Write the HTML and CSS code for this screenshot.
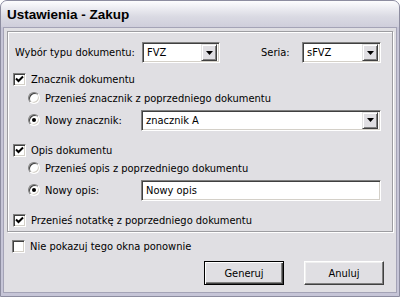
FILE: index.html
```html
<!DOCTYPE html>
<html lang="pl">
<head>
  <meta charset="UTF-8" />
  <title>Ustawienia - Zakup</title>
  <link rel="stylesheet" href="styles.css">
</head>
<body>
  <div class="window">
    <div class="titlebar">Ustawienia - Zakup</div>
    <div class="client">
      <div class="group">
        <div class="row row-type">
          <span class="label label-type">Wybór typu dokumentu:</span>
          <div class="combo combo-type">
            <span class="combo-value">FVZ</span>
            <span class="combo-btn"><svg width="7" height="4" viewBox="0 0 7 4"><path d="M0 0H7L3.5 4Z" fill="#000"/></svg></span>
          </div>
          <span class="label label-seria">Seria:</span>
          <div class="combo combo-seria">
            <span class="combo-value">sFVZ</span>
            <span class="combo-btn"><svg width="7" height="4" viewBox="0 0 7 4"><path d="M0 0H7L3.5 4Z" fill="#000"/></svg></span>
          </div>
        </div>

        <div class="row check-row mt-8">
          <span class="checkbox"><svg width="9" height="9" viewBox="0 0 9 9"><path d="M1 3.5L3.5 6L8 1.5" stroke="#000" stroke-width="2" fill="none"/></svg></span>
          <span class="label">Znacznik dokumentu</span>
        </div>
        <div class="row radio-row mt-3">
          <span class="radio"></span>
          <span class="label">Przenieś znacznik z poprzedniego dokumentu</span>
        </div>
        <div class="row radio-row field-row mt-4">
          <span class="radio on"></span>
          <span class="label label-field">Nowy znacznik:</span>
          <div class="combo combo-wide">
            <span class="combo-value">znacznik A</span>
            <span class="combo-btn"><svg width="7" height="4" viewBox="0 0 7 4"><path d="M0 0H7L3.5 4Z" fill="#000"/></svg></span>
          </div>
        </div>

        <div class="row check-row mt-12">
          <span class="checkbox"><svg width="9" height="9" viewBox="0 0 9 9"><path d="M1 3.5L3.5 6L8 1.5" stroke="#000" stroke-width="2" fill="none"/></svg></span>
          <span class="label">Opis dokumentu</span>
        </div>
        <div class="row radio-row mt-2">
          <span class="radio"></span>
          <span class="label">Przenieś opis z poprzedniego dokumentu</span>
        </div>
        <div class="row radio-row field-row mt-4">
          <span class="radio on"></span>
          <span class="label label-field">Nowy opis:</span>
          <div class="textbox">Nowy opis</div>
        </div>

        <div class="row check-row mt-12">
          <span class="checkbox"><svg width="9" height="9" viewBox="0 0 9 9"><path d="M1 3.5L3.5 6L8 1.5" stroke="#000" stroke-width="2" fill="none"/></svg></span>
          <span class="label">Przenieś notatkę z poprzedniego dokumentu</span>
        </div>
      </div>

      <div class="row check-row outer-check">
        <span class="checkbox"></span>
        <span class="label">Nie pokazuj tego okna ponownie</span>
      </div>

      <div class="buttons">
        <button class="btn btn-default">Generuj</button>
        <button class="btn">Anuluj</button>
      </div>
    </div>
  </div>
</body>
</html>
```

FILE: styles.css
```css
:root {
  --face: #e0dfe3;
  --frame: #c6c5d7;
  --shadow: #9d9da1;
  --dark: #404040;
}

* {
  box-sizing: border-box;
  margin: 0;
  padding: 0;
}

body {
  font-family: 'DejaVu Sans Condensed', 'DejaVu Sans', sans-serif;
  font-size: 11px;
  color: #000;
  background: #fff;
}

.window {
  width: 400px;
  height: 297px;
  background: var(--frame);
  border: 1px solid #8d8da0;
  border-radius: 7px 7px 0 0;
  padding: 0 2px 3px;
  display: flex;
  flex-direction: column;
}

.titlebar {
  height: 26px;
  padding-left: 6px;
  display: flex;
  align-items: center;
  font-family: 'Liberation Sans', Arial, sans-serif;
  font-weight: 700;
  font-size: 13.5px;
  border-radius: 6px 6px 0 0;
  margin: 0 -2px;
  background: linear-gradient(#fdfdfe, #eeeef3 25%, #dadae3 60%, #cfcedb);
}

.client {
  flex: 1;
  background: var(--face);
  border: 1px solid #a4a3b6;
  padding: 3px 3px 0 3px;
}

/* group box */
.group {
  border: 1px solid var(--shadow);
  box-shadow: inset 1px 1px #fff, 1px 1px #fff;
  padding: 10px 5px 3px 5px;
}

.row {
  display: flex;
  align-items: center;
  white-space: nowrap;
}

.row-type {
  height: 21px;
}

.label-type {
  width: 127px;
  margin-left: 2px;
}

.label-seria {
  width: 41px;
  margin-left: 41px;
}

.check-row {
  height: 16px;
}

.radio-row {
  height: 16px;
  padding-left: 15px;
}

.field-row {
  height: 20px;
}

.label-field {
  width: 96px;
}

.mt-2 { margin-top: 2px; }
.mt-3 { margin-top: 3px; }
.mt-4 { margin-top: 4px; }
.mt-8 { margin-top: 8px; }
.mt-12 { margin-top: 12px; }

/* sunken controls */
.checkbox {
  width: 13px;
  height: 13px;
  margin-right: 5px;
  background: #fff;
  border: 1px solid;
  border-color: #808080 #fff #fff #808080;
  box-shadow: inset 1px 1px var(--dark), inset -1px -1px #d4d0c8;
  display: flex;
  align-items: center;
  justify-content: center;
}

.radio {
  width: 12px;
  height: 12px;
  margin-right: 5px;
  border-radius: 50%;
  background: #fff;
  border: 1px solid;
  border-color: #808080 #fff #fff #808080;
  box-shadow: inset 1px 1px var(--dark), inset -1px -1px #d4d0c8;
  position: relative;
}

.radio.on::after {
  content: '';
  position: absolute;
  left: 3px;
  top: 3px;
  width: 4px;
  height: 4px;
  border-radius: 50%;
  background: #000;
}

.combo,
.textbox {
  height: 21px;
  background: #fff;
  border: 1px solid;
  border-color: #808080 #fff #fff #808080;
  box-shadow: inset 1px 1px var(--dark), inset -1px -1px #d4d0c8;
  display: flex;
  align-items: center;
  padding: 2px;
}

.combo-type { width: 78px; }
.combo-seria { width: 79px; }
.combo-wide { width: 240px; }

.textbox {
  width: 240px;
  padding-left: 4px;
}

.combo-value {
  flex: 1;
  padding-left: 2px;
}

.combo-btn {
  width: 16px;
  height: 17px;
  background: var(--face);
  border: 1px solid;
  border-color: #e3e3e3 var(--dark) var(--dark) #e3e3e3;
  box-shadow: inset 1px 1px #fff, inset -1px -1px #808080;
  display: flex;
  align-items: center;
  justify-content: center;
}

.outer-check {
  margin-top: 6px;
  padding-left: 5px;
}

/* buttons */
.buttons {
  display: flex;
  justify-content: flex-end;
  gap: 20px;
  margin-top: 7px;
  padding-right: 9px;
}

.btn {
  width: 80px;
  height: 24px;
  font-family: inherit;
  font-size: 11px;
  color: #000;
  background: var(--face);
  border: 1px solid;
  border-color: #fff var(--dark) var(--dark) #fff;
  box-shadow: inset -1px -1px #808080, inset 1px 1px #f0f0f0;
}

.btn-default {
  border: 1px solid #000;
  box-shadow: inset 1px 1px #fff, inset -1px -1px var(--dark), inset -2px -2px #808080;
}
```
